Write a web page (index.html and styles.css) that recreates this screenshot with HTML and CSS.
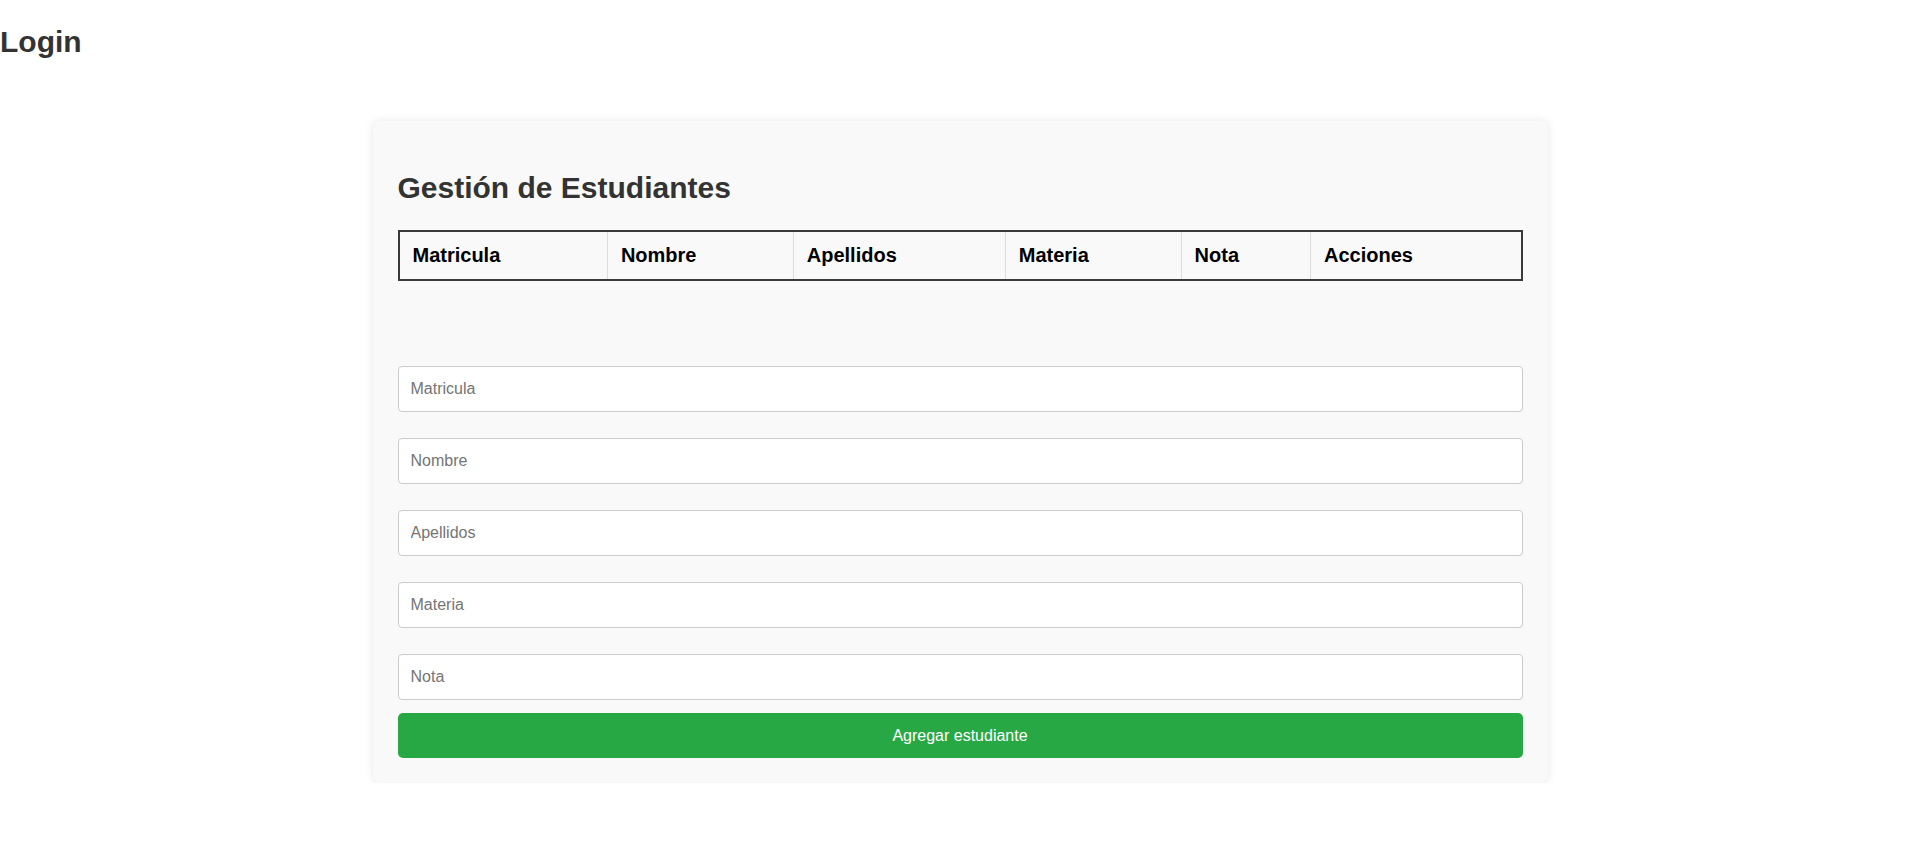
FILE: index.html
```html
<!DOCTYPE html>
<html lang="es">
<head>
<meta charset="utf-8">
<title>Gestión de Estudiantes</title>
<link rel="stylesheet" href="styles.css">
</head>
<body>
  <h1 class="page-title">Login</h1>
  <main class="card">
    <h2 class="card-title">Gestión de Estudiantes</h2>
    <table class="students">
      <thead>
        <tr>
          <th>Matricula</th>
          <th>Nombre</th>
          <th>Apellidos</th>
          <th>Materia</th>
          <th>Nota</th>
          <th>Acciones</th>
        </tr>
      </thead>
      <tbody></tbody>
    </table>
    <form class="student-form">
      <div class="fields">
        <input class="field" type="text" placeholder="Matricula">
        <input class="field" type="text" placeholder="Nombre">
        <input class="field" type="text" placeholder="Apellidos">
        <input class="field" type="text" placeholder="Materia">
        <input class="field" type="text" placeholder="Nota">
      </div>
      <button class="btn-add" type="button">Agregar estudiante</button>
    </form>
  </main>
</body>
</html>
```

FILE: styles.css
```css
* {
  box-sizing: border-box;
}

html, body {
  margin: 0;
  padding: 0;
  background: #ffffff;
}

body {
  font-family: "Liberation Sans", Arial, sans-serif;
  color: #333333;
}

.page-title {
  margin: 25px 0 0 0;
  font-size: 30px;
  line-height: 34.5px;
  font-weight: bold;
  color: #333333;
}

.card {
  width: 1175px;
  margin: 61px auto 0 auto;
  padding: 25px;
  background: #f9f9f9;
  border-radius: 8px;
  box-shadow: 0 0 10px rgba(0, 0, 0, 0.1);
}

.card-title {
  margin: 25px 0 25px 0;
  font-size: 30px;
  line-height: 34.5px;
  font-weight: bold;
  color: #333333;
}

.students {
  width: 100%;
  border-collapse: collapse;
  border: 2px solid #3a3a3a;
}

.students th {
  padding: 12px 13px;
  font-size: 20px;
  line-height: 23px;
  font-weight: bold;
  text-align: left;
  color: #000000;
  border-left: 1px solid #dddddd;
  border-right: 1px solid #dddddd;
}

.student-form {
  margin-top: 85px;
}

.fields {
  display: flex;
  flex-direction: column;
  gap: 26px;
}

.field {
  display: block;
  width: 100%;
  height: 46px;
  padding: 0 12px;
  font-family: "Liberation Sans", Arial, sans-serif;
  font-size: 16px;
  color: #333333;
  background: #ffffff;
  border: 1px solid #cccccc;
  border-radius: 4px;
}

.field::placeholder {
  color: #757575;
}

.btn-add {
  display: block;
  width: 100%;
  height: 45px;
  margin-top: 13px;
  font-family: "Liberation Sans", Arial, sans-serif;
  font-size: 16px;
  color: #ffffff;
  background: #28a745;
  border: none;
  border-radius: 5px;
  cursor: pointer;
}
```
